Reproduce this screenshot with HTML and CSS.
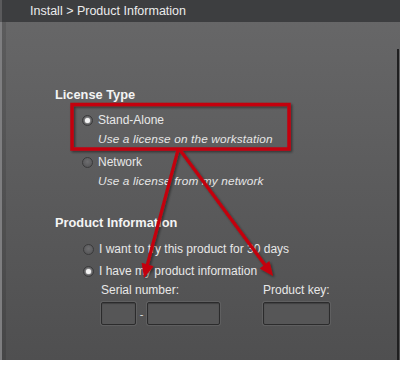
FILE: index.html
```html
<!DOCTYPE html>
<html>
<head>
<meta charset="utf-8">
<link rel="stylesheet" href="styles.css">
</head>
<body>
<div class="window">
  <div class="titlebar">Install &gt; Product Information</div>
  <div class="body">
    <div class="content">
      <section class="group">
        <h2 class="heading">License Type</h2>
        <div class="option">
          <div class="row"><span class="radio checked"></span><span class="label">Stand-Alone</span></div>
          <div class="desc">Use a license on the workstation</div>
        </div>
        <div class="option">
          <div class="row"><span class="radio"></span><span class="label">Network</span></div>
          <div class="desc">Use a license from my network</div>
        </div>
      </section>
      <section class="group group2">
        <h2 class="heading">Product Information</h2>
        <div class="row row2"><span class="radio"></span><span class="label">I want to try this product for 30 days</span></div>
        <div class="row row2"><span class="radio checked"></span><span class="label">I have my product information</span></div>
        <div class="fields">
          <div class="field serial">
            <div class="flabel">Serial number:</div>
            <div class="inputs">
              <span class="input w1"></span><span class="dash">-</span><span class="input w2"></span>
            </div>
          </div>
          <div class="field">
            <div class="flabel">Product key:</div>
            <div class="inputs"><span class="input w3"></span></div>
          </div>
        </div>
      </section>
    </div>
    <div class="edge"></div>
  </div>
  <svg class="notes" width="400" height="368" viewBox="0 0 400 368">
    <defs>
      <filter id="sh" x="-10%" y="-10%" width="130%" height="130%">
        <feDropShadow dx="1.5" dy="1.5" stdDeviation="1.2" flood-color="#000" flood-opacity="0.45"/>
      </filter>
    </defs>
    <g filter="url(#sh)" fill="#c4000b" stroke="#c4000b">
      <rect x="72" y="104.5" width="217" height="44.5" fill="none" stroke-width="3.5"/>
      <line x1="178" y1="150" x2="147" y2="266" stroke-width="3.2"/>
      <polygon points="144,278 153.6,266.2 141.6,262.8" stroke="none"/>
      <line x1="180" y1="150" x2="265" y2="265" stroke-width="3.2"/>
      <polygon points="273,276 259.6,268.6 269.4,261" stroke="none"/>
    </g>
  </svg>
</div>
</body>
</html>
```
FILE: styles.css
```css
* { box-sizing: border-box; }
html, body { margin: 0; padding: 0; background: #ffffff; }
body { width: 400px; height: 368px; overflow: hidden; font-family: "Liberation Sans", Arial, sans-serif; }

.window {
  position: relative;
  width: 400px;
  height: 360px;
  display: flex;
  flex-direction: column;
  background: linear-gradient(#686869, #4f4f50);
}

.titlebar {
  height: 22px;
  line-height: 22px;
  padding-left: 28px;
  background: #3d3e40;
  color: #ececec;
  font-size: 12.5px;
  border-left: 2px solid #5a5a5c;
}

.body {
  flex: 1;
  display: flex;
  border-left: 2px solid #7e7e80;
  box-shadow: inset 4px 0 0 rgba(0,0,0,0.1);
}

.content {
  flex: 1;
  padding: 66px 0 0 53px;
  color: #e8e8e8;
}

.edge {
  width: 2px;
  margin-top: 27px;
  background: #1f1f20;
  margin-right: 1px;
}

.heading {
  margin: 0;
  font-size: 12.8px;
  font-weight: bold;
  line-height: 14px;
  color: #f4f4f4;
}

.group .heading + .option { margin-top: 8.5px; }

.option { margin-left: 27px; margin-bottom: 4px; }

.row {
  display: flex;
  align-items: center;
  height: 19px;
  font-size: 12px;
}

.radio {
  width: 11px;
  height: 11px;
  border-radius: 50%;
  border: 1px solid #3a3a3b;
  background: radial-gradient(circle at 50% 40%, #6e6e70, #505052);
  margin-right: 5px;
  display: inline-flex;
  align-items: center;
  justify-content: center;
  flex: none;
}
.radio.checked::after {
  content: "";
  width: 5px;
  height: 5px;
  border-radius: 50%;
  background: #f4f4f4;
  box-shadow: 0 0 2px #fff;
}

.desc {
  margin-left: 16px;
  height: 19px;
  line-height: 19px;
  font-size: 11.8px;
  font-style: italic;
  color: #e6e6e6;
  letter-spacing: 0.15px;
}

.group2 { margin-top: 25.5px; }
.group2 .heading { margin-bottom: 9.5px; }
.row2 { margin-left: 28px; margin-bottom: 3px; }

.fields {
  display: flex;
  margin-left: 46px;
  margin-top: -3px;
}
.field.serial { width: 162px; }
.flabel {
  height: 19px;
  line-height: 19px;
  font-size: 12px;
  color: #e8e8e8;
  margin-bottom: 2.5px;
}
.inputs { display: flex; align-items: center; }
.input {
  height: 23px;
  border: 1px solid #2b2b2c;
  border-radius: 2px;
  background: #565657;
  box-shadow: 0 0 0 1px rgba(255,255,255,0.08), inset 0 1px 1px rgba(0,0,0,0.25);
}
.w1 { width: 35px; }
.w2 { width: 73px; }
.w3 { width: 67px; }
.dash { width: 11px; text-align: center; font-size: 11px; color: #e0e0e0; }

.notes { position: absolute; left: 0; top: 0; pointer-events: none; }
```
